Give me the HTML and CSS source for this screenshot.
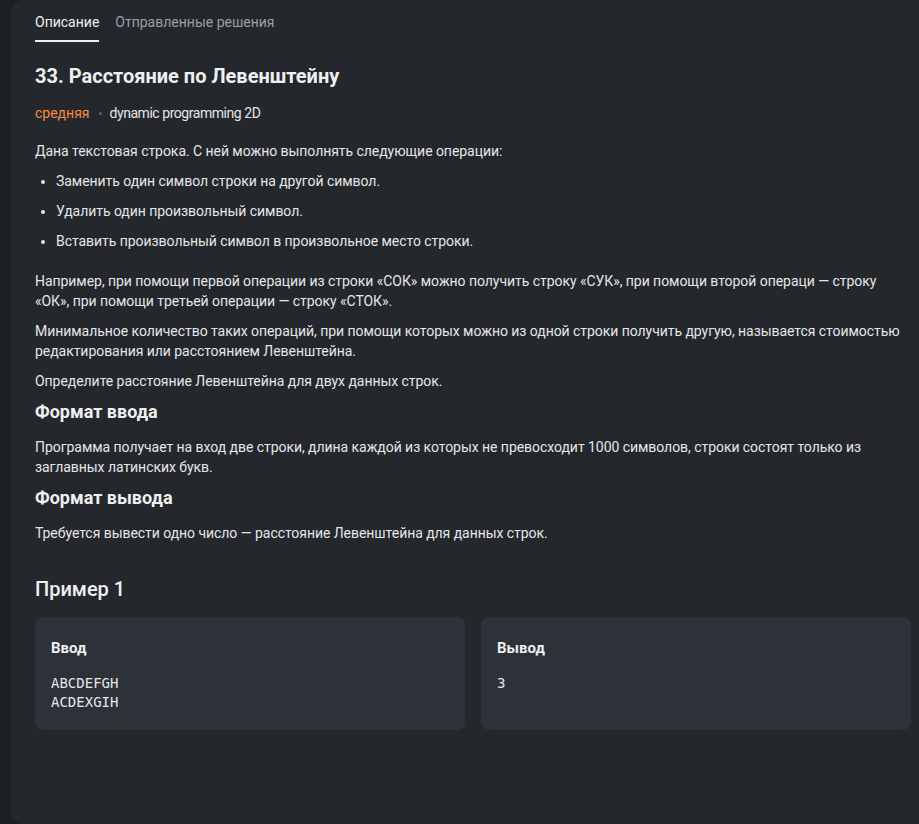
FILE: index.html
```html
<!DOCTYPE html>
<html lang="ru">
<head>
<meta charset="utf-8">
<link rel="stylesheet" href="styles.css">
</head>
<body>
<div class="panel">
  <nav class="tabs">
    <span class="tab active">Описание</span>
    <span class="tab">Отправленные решения</span>
  </nav>
  <h1 class="title">33. Расстояние по Левенштейну</h1>
  <div class="meta">
    <span class="level">средняя</span>
    <span class="dot"></span>
    <span class="tag">dynamic programming 2D</span>
  </div>
  <div class="statement">
    <p>Дана текстовая строка. С ней можно выполнять следующие операции:</p>
    <ul>
      <li>Заменить один символ строки на другой символ.</li>
      <li>Удалить один произвольный символ.</li>
      <li>Вставить произвольный символ в произвольное место строки.</li>
    </ul>
    <p>Например, при помощи первой операции из строки «СОК» можно получить строку «СУК», при помощи второй операци — строку «ОК», при помощи третьей операции — строку «СТОК».</p>
    <p>Минимальное количество таких операций, при помощи которых можно из одной строки получить другую, называется стоимостью редактирования или расстоянием Левенштейна.</p>
    <p>Определите расстояние Левенштейна для двух данных строк.</p>
    <h2>Формат ввода</h2>
    <p>Программа получает на вход две строки, длина каждой из которых не превосходит 1000 символов, строки состоят только из заглавных латинских букв.</p>
    <h2>Формат вывода</h2>
    <p>Требуется вывести одно число — расстояние Левенштейна для данных строк.</p>
  </div>
  <h3 class="example-title">Пример 1</h3>
  <div class="examples">
    <div class="card">
      <div class="card-title">Ввод</div>
      <pre class="code">ABCDEFGH
ACDEXGIH</pre>
    </div>
    <div class="card">
      <div class="card-title">Вывод</div>
      <pre class="code">3</pre>
    </div>
  </div>
</div>
</body>
</html>
```
FILE: styles.css
```css
html, body {
  margin: 0;
  padding: 0;
  background: #1c1f22;
  overflow: hidden;
  height: 824px;
}
body {
  font-family: Roboto, "Noto Sans", sans-serif;
  color: #e4e6e8;
  font-size: 14px;
  line-height: 20px;
}
.panel {
  box-sizing: border-box;
  margin-left: 11px;
  width: 924px;
  height: 824px;
  background: #24282c;
  border-radius: 12px;
  padding: 0 24px;
}
.tabs {
  display: flex;
  gap: 16px;
  height: 42px;
}
.tab {
  box-sizing: border-box;
  padding-top: 12px;
  height: 42px;
  color: #9ba0a6;
  font-size: 14px;
}
.tab.active {
  color: #eef0f2;
  border-bottom: 2px solid #eef0f2;
}
.title {
  margin: 22px 0 0;
  font-size: 20px;
  line-height: 24px;
  font-weight: 700;
  color: #eef0f2;
}
.meta {
  display: flex;
  align-items: center;
  margin-top: 15px;
  font-size: 14px;
}
.level { color: #f58b3c; }
.dot {
  width: 3px;
  height: 3px;
  border-radius: 50%;
  background: #5c6168;
  margin: 0 8px 0 9px;
}
.tag { color: #e4e6e8; letter-spacing: -0.45px; }
.statement { margin-top: 18px; letter-spacing: -0.05px; }
.statement p { margin: 0 0 10px; }
.statement ul {
  margin: 0 0 20px;
  padding-left: 21px;
}
.statement li { margin-bottom: 10px; }
.statement li::marker { font-size: 13px; }
.statement h2 {
  margin: 0 0 14px;
  font-size: 18px;
  line-height: 22px;
  font-weight: 700;
  letter-spacing: 0;
  color: #eef0f2;
}
.example-title {
  margin: 34px 0 16px;
  font-size: 20px;
  line-height: 24px;
  font-weight: 500;
  color: #eef0f2;
}
.examples {
  display: grid;
  grid-template-columns: 1fr 1fr;
  gap: 16px;
}
.card {
  background: #2d3138;
  border-radius: 8px;
  padding: 20px 16px 18px;
  min-height: 112px;
  box-sizing: border-box;
}
.card-title {
  font-size: 15px;
  font-weight: 700;
  line-height: 22px;
  color: #eef0f2;
}
.code {
  margin: 15px 0 0;
  font-family: "DejaVu Sans Mono", monospace;
  font-size: 14px;
  line-height: 19px;
  color: #e4e6e8;
}
```
